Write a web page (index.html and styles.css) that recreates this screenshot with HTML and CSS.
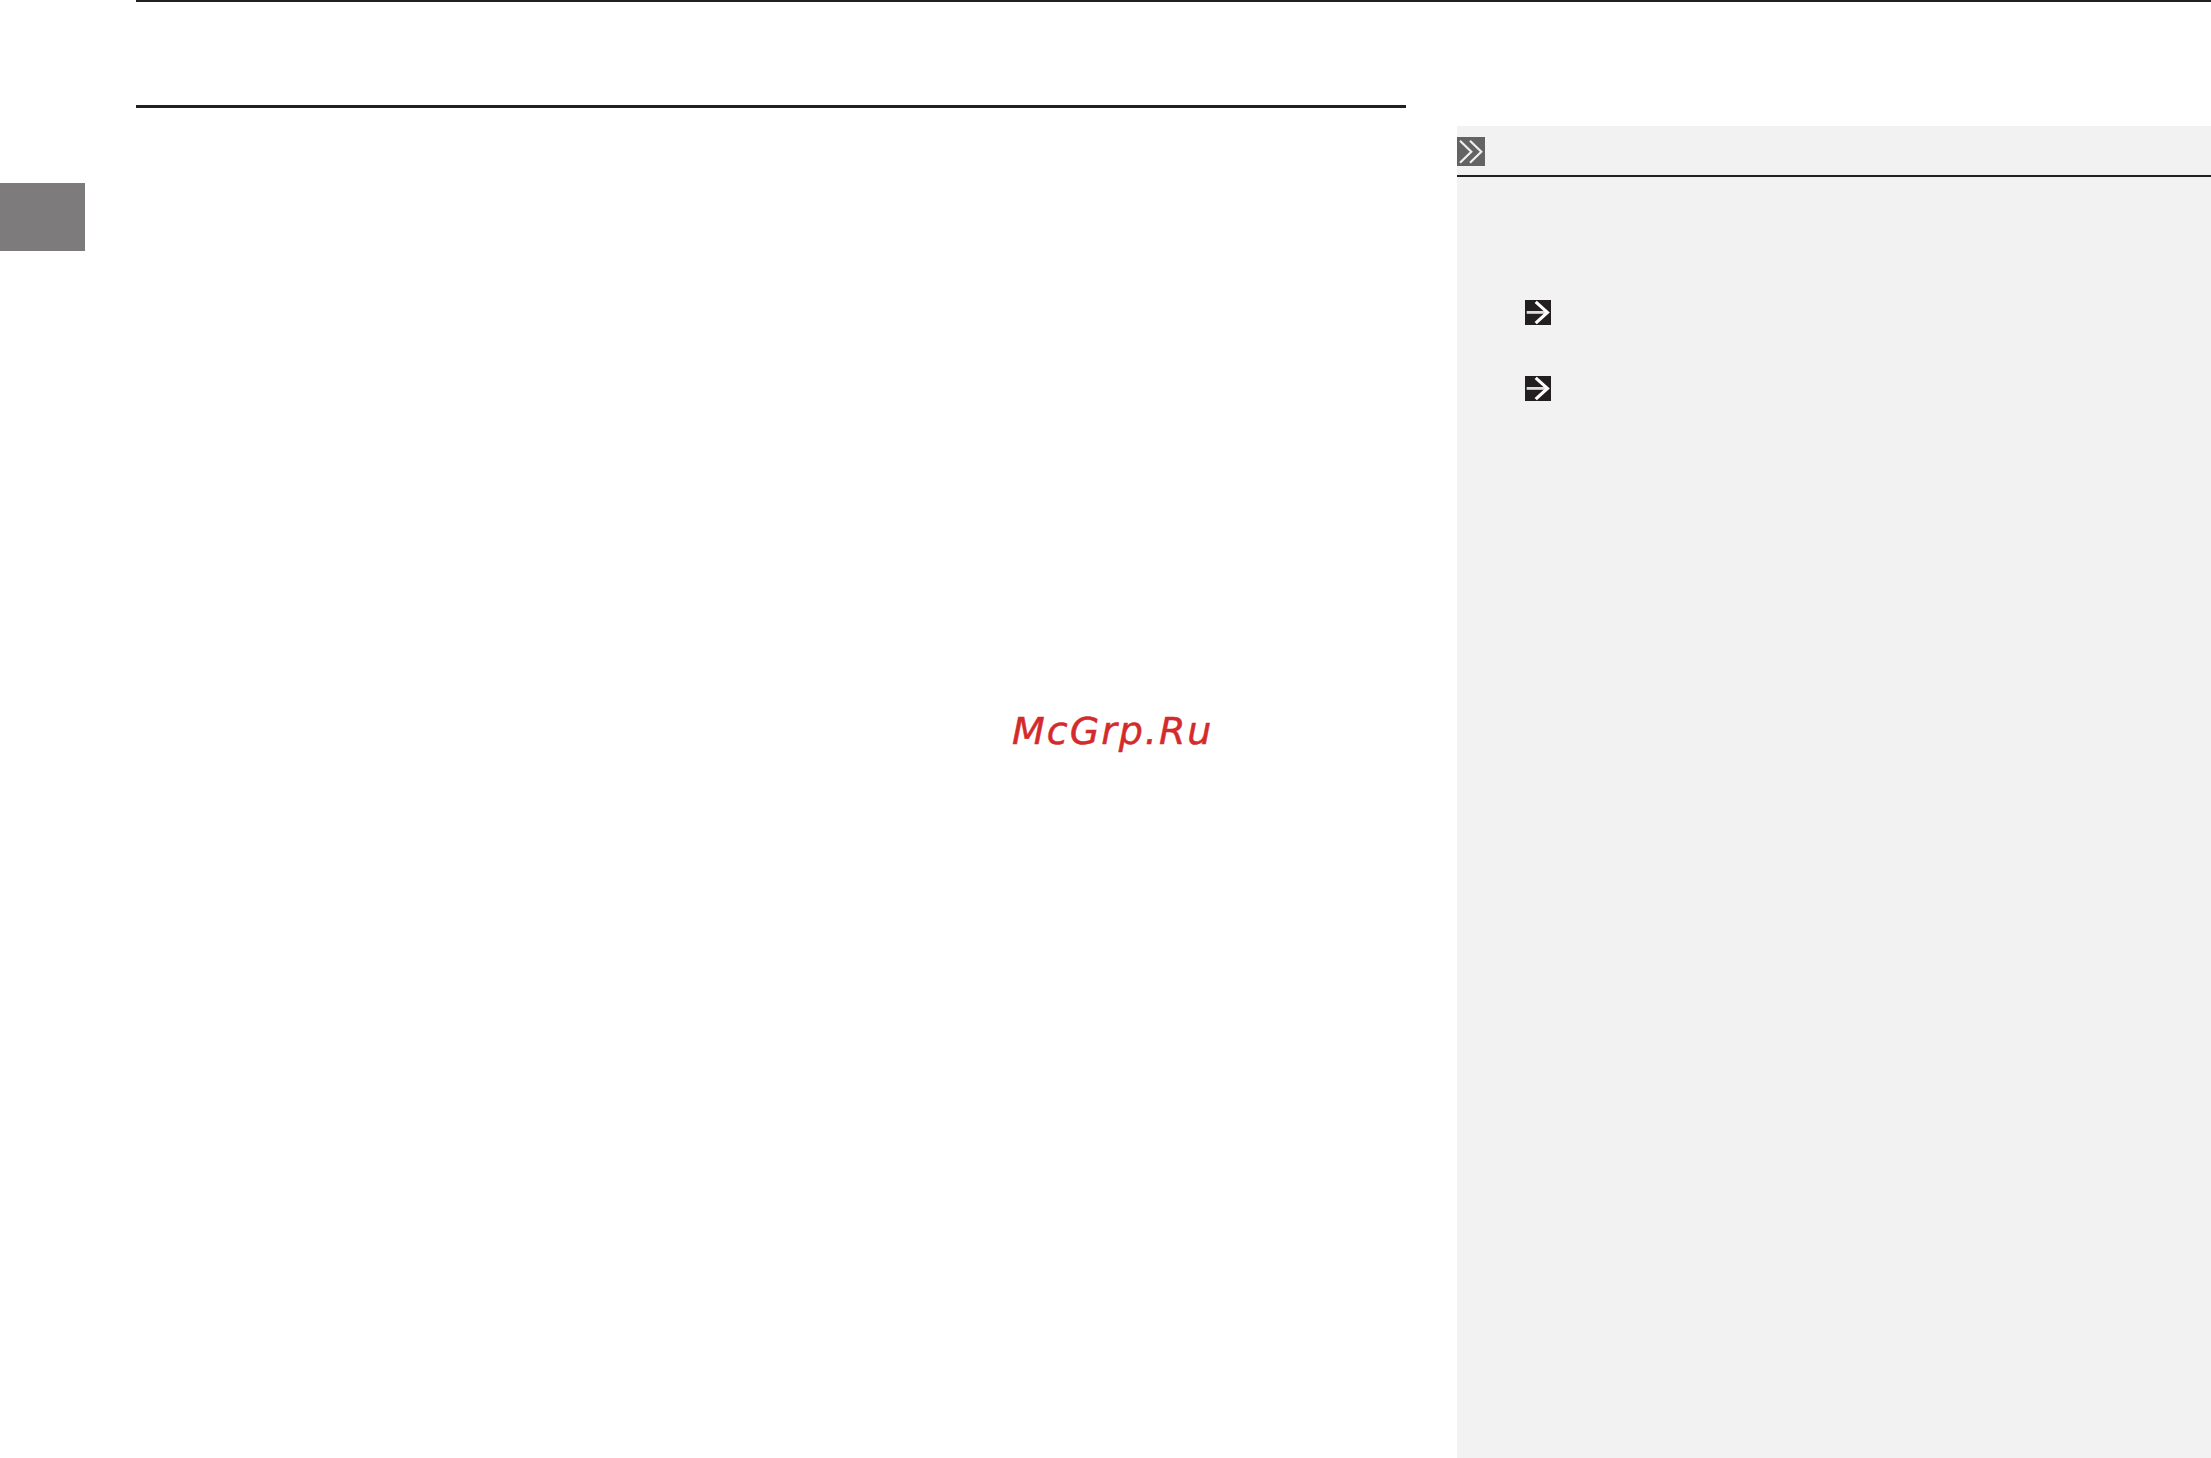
FILE: index.html
```html
<!DOCTYPE html>
<html lang="ru">
<head>
<meta charset="utf-8">
<title>McGrp.Ru</title>
<link rel="stylesheet" href="styles.css">
</head>
<body>
<div class="page">
  <div class="top-rule"></div>
  <div class="columns">
    <div class="tab-col"><div class="tab"></div></div>
    <main class="main">
      <div class="main-rule"></div>
      <div class="mark">McGrp.Ru</div>
    </main>
    <aside class="side">
      <div class="side-head">
        <svg class="badge" viewBox="0 0 28 29" aria-hidden="true">
          <rect width="28" height="29" fill="#646363"/>
          <path d="M3 3.7L14.3 14.7L3 25.7M13 3.7L24.3 14.7L13 25.7" fill="none" stroke="#eeeeee" stroke-width="2.2"/>
        </svg>
      </div>
      <div class="side-list">
        <svg class="arrow" viewBox="0 0 26 25" aria-hidden="true">
          <rect width="26" height="25" fill="#231f20"/>
          <path d="M1.7 12.4H22" fill="none" stroke="#ddd" stroke-width="2.8"/>
          <path d="M10.7 1.9L22.4 12.4L10.7 23.1" fill="none" stroke="#fff" stroke-width="3.2"/>
        </svg>
        <svg class="arrow" viewBox="0 0 26 25" aria-hidden="true">
          <rect width="26" height="25" fill="#231f20"/>
          <path d="M1.7 12.4H22" fill="none" stroke="#ddd" stroke-width="2.8"/>
          <path d="M10.7 1.9L22.4 12.4L10.7 23.1" fill="none" stroke="#fff" stroke-width="3.2"/>
        </svg>
      </div>
    </aside>
  </div>
</div>
</body>
</html>
```
FILE: styles.css
```css
html, body {
  margin: 0;
  padding: 0;
  background: #fff;
}
.page {
  width: 2211px;
  height: 1458px;
  display: flex;
  flex-direction: column;
  overflow: hidden;
}
.top-rule {
  height: 2px;
  margin-left: 136px;
  background: #231f20;
  flex: none;
}
.columns {
  flex: 1;
  display: flex;
  min-height: 0;
}
.tab-col {
  width: 136px;
  flex: none;
  padding-top: 181px;
}
.tab {
  width: 85px;
  height: 68px;
  background: #7d7b7b;
}
.main {
  width: 1270px;
  flex: none;
  padding-top: 103px;
}
.main-rule {
  height: 3px;
  background: #231f20;
}
.mark {
  margin-top: 600px;
  margin-left: 876px;
  font-family: "DejaVu Sans", sans-serif;
  font-style: italic;
  font-size: 38px;
  line-height: 46px;
  letter-spacing: 2px;
  color: #d42a2c;
  -webkit-text-stroke: 0.5px #d42a2c;
  white-space: nowrap;
}
.side {
  margin-left: 51px;
  margin-top: 124px;
  flex: 1;
  background: #f2f2f2;
}
.side-head {
  height: 38px;
  padding-top: 11px;
  border-bottom: 2px solid #231f20;
}
.badge {
  display: block;
  width: 28px;
  height: 29px;
}
.side-list {
  display: flex;
  flex-direction: column;
  gap: 51px;
  padding: 123px 0 0 68px;
}
.arrow {
  display: block;
  width: 26px;
  height: 25px;
}
```
